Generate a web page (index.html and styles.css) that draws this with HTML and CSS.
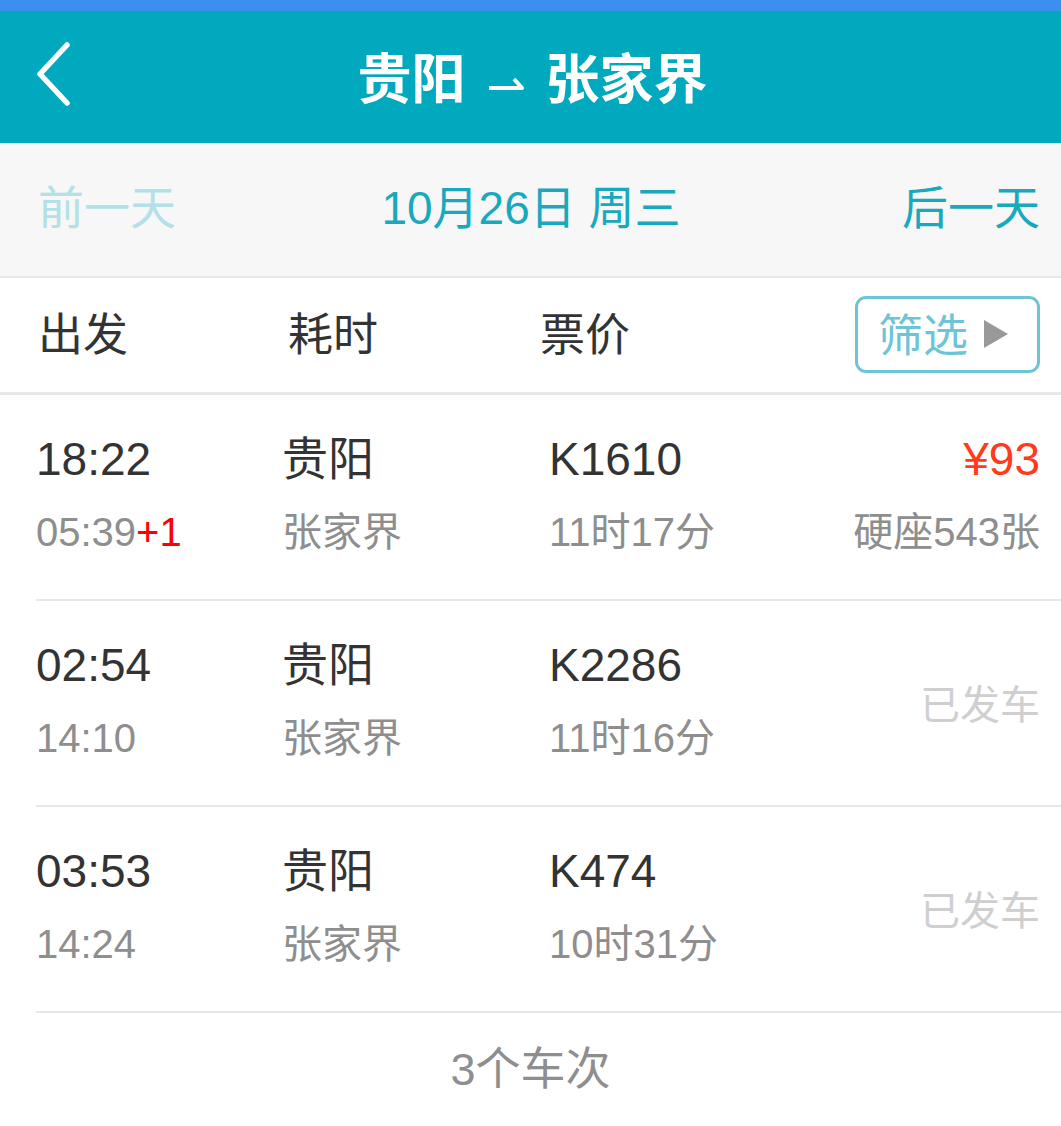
FILE: index.html
```html
<!DOCTYPE html>
<html lang="zh-CN">
<head>
  <meta charset="UTF-8" />
  <meta name="viewport" content="width=device-width, initial-scale=1.0"/>
  <title>贵阳 - 张家界</title>
  <link rel="stylesheet" href="styles.css">
</head>
<body>

  <div class="status-bar"></div>

  <header class="top-bar">
    <a class="back" href="#">
      <svg width="40" height="64" viewBox="0 0 40 64">
        <path d="M33 3 L6 32 L33 61" fill="none" stroke="#fff" stroke-width="5.5" stroke-linecap="round" stroke-linejoin="round"/>
      </svg>
    </a>
    <h1 class="title">
      <span>贵阳</span>
      <svg class="arrow" width="36" height="20" viewBox="0 0 36 20">
        <path d="M1 16 H34 L26 7" fill="none" stroke="#fff" stroke-width="4" stroke-linejoin="round"/>
      </svg>
      <span>张家界</span>
    </h1>
  </header>

  <div class="date-bar">
    <span class="prev">前一天</span>
    <span class="current">10月26日 周三</span>
    <span class="next">后一天</span>
  </div>

  <div class="sort-bar">
    <span>出发</span>
    <span>耗时</span>
    <span>票价</span>
    <button class="filter">筛选<i class="tri"></i></button>
  </div>

  <ul class="train-list">
    <li class="train">
      <div class="col">
        <div class="main">18:22</div>
        <div class="sub">05:39<span class="plus">+1</span></div>
      </div>
      <div class="col">
        <div class="main">贵阳</div>
        <div class="sub">张家界</div>
      </div>
      <div class="col">
        <div class="main">K1610</div>
        <div class="sub">11时17分</div>
      </div>
      <div class="col right">
        <div class="main price">¥93</div>
        <div class="sub">硬座543张</div>
      </div>
    </li>
    <li class="train">
      <div class="col">
        <div class="main">02:54</div>
        <div class="sub">14:10</div>
      </div>
      <div class="col">
        <div class="main">贵阳</div>
        <div class="sub">张家界</div>
      </div>
      <div class="col">
        <div class="main">K2286</div>
        <div class="sub">11时16分</div>
      </div>
      <div class="col right departed">已发车</div>
    </li>
    <li class="train">
      <div class="col">
        <div class="main">03:53</div>
        <div class="sub">14:24</div>
      </div>
      <div class="col">
        <div class="main">贵阳</div>
        <div class="sub">张家界</div>
      </div>
      <div class="col">
        <div class="main">K474</div>
        <div class="sub">10时31分</div>
      </div>
      <div class="col right departed">已发车</div>
    </li>
  </ul>

  <div class="count">3个车次</div>

</body>
</html>
```

FILE: styles.css
```css
:root {
  --teal: #00a9bd;
  --teal-text: #1aa9bc;
  --teal-light: #b3e1e8;
  --line: #e8e8e8;
  --dark: #333;
  --gray: #8e8e8e;
}

* {
  box-sizing: border-box;
}

body {
  margin: 0;
  font-family: "Liberation Sans", "Noto Sans CJK SC", sans-serif;
  background-color: #fff;
  color: var(--dark);
}

.status-bar {
  height: 11px;
  background-color: #3a8fef;
}

.top-bar {
  height: 132px;
  background-color: var(--teal);
  display: flex;
  align-items: center;
  justify-content: center;
  position: relative;
}

.back {
  position: absolute;
  left: 34px;
  top: 31px;
  display: block;
  line-height: 0;
}

.title {
  margin: 0 0 4px 4px;
  color: #fff;
  font-size: 54px;
  font-weight: bold;
  display: flex;
  align-items: center;
  gap: 22px;
}

.title .arrow {
  margin-top: 14px;
}

.date-bar {
  height: 135px;
  background-color: #f7f7f7;
  border-bottom: 2px solid var(--line);
  display: flex;
  align-items: center;
  justify-content: space-between;
  padding: 0 21px 12px 38px;
  font-size: 46px;
}

.date-bar .prev {
  color: var(--teal-light);
}

.date-bar .current {
  color: var(--teal-text);
  margin-right: 16px;
}

.date-bar .next {
  color: var(--teal-text);
}

.sort-bar {
  height: 117px;
  border-bottom: 3px solid var(--line);
  display: grid;
  grid-template-columns: 250px 252px 1fr auto;
  align-items: center;
  padding: 0 21px 8px 38px;
  font-size: 45px;
  color: var(--dark);
}

.filter {
  width: 185px;
  height: 77px;
  border: 3px solid #6cc5d6;
  border-radius: 11px;
  background: #fff;
  color: #6cc5d6;
  font-family: inherit;
  font-size: 45px;
  display: flex;
  align-items: center;
  padding: 0 0 4px 20px;
  margin-top: 6px;
  cursor: pointer;
}

.filter .tri {
  width: 0;
  height: 0;
  border-top: 14px solid transparent;
  border-bottom: 14px solid transparent;
  border-left: 24px solid #999;
  margin-left: 16px;
  margin-top: 4px;
}

.train-list {
  list-style: none;
  margin: 0;
  padding: 0;
}

.train {
  margin-left: 36px;
  height: 206px;
  border-bottom: 2px solid var(--line);
  display: grid;
  grid-template-columns: 246px 267px 1fr auto;
  align-items: center;
  padding: 0 21px 2px 0;
}

.col .main {
  font-size: 46px;
  line-height: 73px;
  color: var(--dark);
}

.col .sub {
  font-size: 40px;
  line-height: 73px;
  color: var(--gray);
}

.col.right {
  text-align: right;
}

.price {
  color: #ff3b1b !important;
}

.plus {
  color: #f00;
}

.departed {
  font-size: 40px;
  color: #cfcfcf;
}

.count {
  text-align: center;
  font-size: 45px;
  color: var(--gray);
  padding: 20px 0 0 0;
}
```
